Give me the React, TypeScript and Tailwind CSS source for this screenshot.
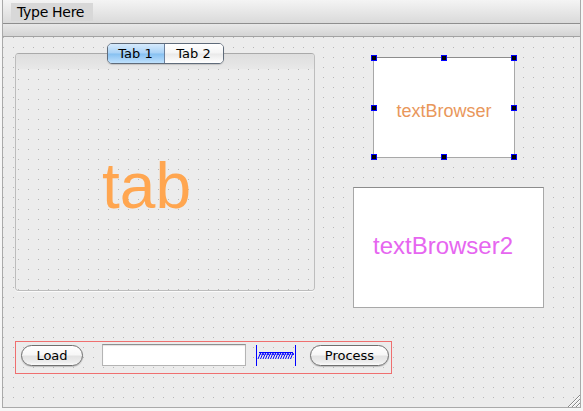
import React from "react";

function Handle({ pos }: { pos: string }) {
  return <div className={`absolute w-[6px] h-[6px] bg-black border border-[#0000ff] ${pos}`} />;
}

function AquaButton({ label, w }: { label: string; w: string }) {
  return (
    <div
      className={`${w} mt-[3px] h-[21px] shrink-0 rounded-full border border-[#6f6f6f] bg-[linear-gradient(to_bottom,#ffffff_0%,#f7f7f7_45%,#e3e3e3_55%,#ededed_85%,#fbfbfb_100%)] shadow-[0_1px_1px_rgba(0,0,0,0.2)] flex items-center justify-center text-[13px] leading-none text-black`}
    >
      {label}
    </div>
  );
}

export default function App() {
  const slashes = Array.from({ length: 14 }, (_, i) => 2 + i * 2.5);
  return (
    <div className="w-[583px] h-[411px] bg-[#f6f6f6] overflow-hidden font-['DejaVu_Sans',sans-serif]">
      <div className="ml-[2px] w-[579px] h-[408px] flex flex-col border-x border-b border-[#a9a9a9]">
        {/* menu bar */}
        <div className="h-[24px] shrink-0 border-b border-[#8e8e8e] bg-[linear-gradient(to_bottom,#f4f4f4,#dadada)] flex items-start pl-[8px] pt-[3px]">
          <div className="w-[82px] h-[18px] pl-[6px] bg-[#d8d8d8] text-[14px] leading-[18px] tracking-[-0.3px] text-black whitespace-nowrap">
            Type Here
          </div>
        </div>
        {/* tool band */}
        <div className="h-[13px] shrink-0 border-b border-[#a2a2a2] bg-[linear-gradient(to_bottom,#e8e8e8,#d4d4d4)]" />
        {/* canvas */}
        <div className="flex-1 relative flex flex-col bg-[#ececec] bg-[conic-gradient(from_270deg_at_1px_1px,#b6b6b6_90deg,transparent_0)] bg-size-[10px_10px] bg-[length:10px_10px]">
          <div className="flex items-start pl-[12px]">
            {/* tab widget */}
            <div className="mt-[6px] w-[300px] flex flex-col">
              <div className="self-center relative z-10 h-[21px] w-[117px] flex rounded-[5px] border border-[#5f6b7a] overflow-hidden text-[13px] leading-none text-black shadow-[0_1px_1px_rgba(0,0,0,0.15)]">
                <div className="w-[57px] border-r border-[#6a7f9c] bg-[linear-gradient(to_bottom,#d6eafc_0%,#a9d2f6_48%,#86c0f1_52%,#bfe1fd_100%)] flex items-center justify-center">
                  Tab 1
                </div>
                <div className="flex-1 bg-[linear-gradient(to_bottom,#ffffff_0%,#f5f5f5_48%,#e9e9e9_52%,#ffffff_100%)] flex items-center justify-center">
                  Tab 2
                </div>
              </div>
              <div className="-mt-[11px] h-[238px] rounded-[4px] border border-[#bdbdbd] border-t-[#a9a9a9] flex flex-col overflow-hidden shadow-[0_1px_0_rgba(255,255,255,0.8)]">
                <div className="h-[15px] shrink-0 bg-[linear-gradient(to_bottom,#dedede,#e8e8e8)]" />
                <div className="flex-1 bg-[#ececec] bg-[conic-gradient(from_270deg_at_1px_1px,#b6b6b6_90deg,transparent_0)] bg-size-[10px_10px] bg-[length:10px_10px] bg-position-[2px_0px] bg-[position:2px_0px] pl-[86px] pt-[85px] font-['Liberation_Sans',Arial,sans-serif] text-[64px] leading-[64px] text-[#ffa650]">
                  tab
                </div>
              </div>
            </div>
            {/* right column */}
            <div className="ml-[38px] mt-[20px] flex flex-col items-start">
              <div className="ml-[20px] w-[142px] h-[101px] relative bg-white border border-[#a8a8a8] border-t-[#8c8c8c] flex items-center justify-center pt-[6px] font-['Liberation_Sans',Arial,sans-serif] text-[18px] leading-[18px] text-[#e9975b]">
                textBrowser
                <Handle pos="-left-[3px] -top-[3px]" />
                <Handle pos="left-1/2 -translate-x-1/2 -top-[3px]" />
                <Handle pos="-right-[3px] -top-[3px]" />
                <Handle pos="-left-[3px] top-1/2 -translate-y-1/2" />
                <Handle pos="-right-[3px] top-1/2 -translate-y-1/2" />
                <Handle pos="-left-[3px] -bottom-[3px]" />
                <Handle pos="left-1/2 -translate-x-1/2 -bottom-[3px]" />
                <Handle pos="-right-[3px] -bottom-[3px]" />
              </div>
              <div className="mt-[29px] w-[191px] h-[121px] bg-white border border-[#a8a8a8] border-t-[#8c8c8c] pl-[19px] pt-[46px] font-['Liberation_Sans',Arial,sans-serif] text-[24px] leading-[24px] text-[#e666f0]">
                textBrowser2
              </div>
            </div>
          </div>
          {/* bottom horizontal layout */}
          <div className="ml-[12px] mt-[33px] w-[377px] h-[33px] shadow-[inset_0_0_0_1px_#ef6f6f] flex items-start pl-[6px] pt-[1px]">
            <AquaButton label="Load" w="w-[62px]" />
            <div className="ml-[19px] mt-[2px] h-[22px] w-[144px] shrink-0 bg-white border border-[#b4b4b4] border-t-[#8f8f8f] shadow-[inset_0_1px_1px_rgba(0,0,0,0.12)]" />
            <svg className="ml-[10px] mt-[1px] shrink-0" width="40" height="24" viewBox="0 0 40 24">
              <line x1="0.5" y1="2" x2="0.5" y2="23" stroke="#0000ff" strokeWidth="1" />
              <line x1="39.5" y1="2" x2="39.5" y2="23" stroke="#0000ff" strokeWidth="1" />
              <line x1="3" y1="9.5" x2="37" y2="9.5" stroke="#0000ff" strokeWidth="1" />
              {slashes.map((x) => (
                <path key={x} d={`M${x} 16 L${x + 2.5} 10 M${x + 2.5} 10 L${x + 3} 12`} stroke="#0000ff" strokeWidth="1" fill="none" />
              ))}
            </svg>
            <div className="ml-[14px]">
              <AquaButton label="Process" w="w-[79px]" />
            </div>
          </div>
          {/* resize grip */}
          <svg className="absolute right-0 bottom-0" width="12" height="12" viewBox="0 0 12 12">
            <line x1="12" y1="0" x2="0" y2="12" stroke="#8a8a8a" strokeWidth="1" />
            <line x1="12" y1="1" x2="1" y2="12" stroke="#ffffff" strokeWidth="1" />
            <line x1="12" y1="4" x2="4" y2="12" stroke="#8a8a8a" strokeWidth="1" />
            <line x1="12" y1="5" x2="5" y2="12" stroke="#ffffff" strokeWidth="1" />
            <line x1="12" y1="8" x2="8" y2="12" stroke="#8a8a8a" strokeWidth="1" />
            <line x1="12" y1="9" x2="9" y2="12" stroke="#ffffff" strokeWidth="1" />
          </svg>
        </div>
      </div>
    </div>
  );
}
